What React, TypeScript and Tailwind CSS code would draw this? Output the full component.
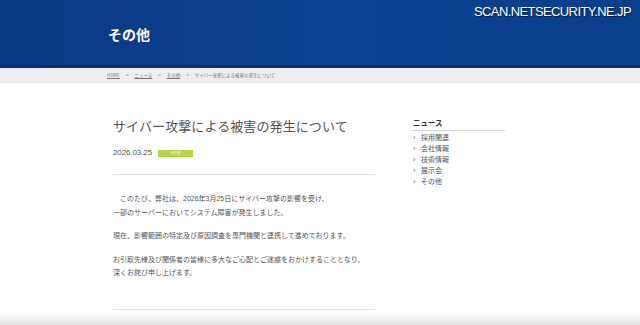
import React from "react";

const jp = { fontFamily: '"Noto Sans CJK JP", "Noto Sans", sans-serif' };
const body = { fontFamily: '"Liberation Sans", "Noto Sans CJK JP", sans-serif' };

export default function App() {
  const items = ["採用関連", "会社情報", "技術情報", "展示会", "その他"];
  return (
    <div className="relative w-[640px] h-[325px] overflow-hidden bg-white" style={jp}>
      {/* Header */}
      <header className="relative h-[68px] border-b-[3px] border-[#06306e] bg-gradient-to-r from-[#083a84] via-[#0b4090] to-[#0a3f8d]">
        <div className="absolute right-[9px] top-[3px] text-white text-[13px] tracking-[-0.6px] leading-[18px] [text-shadow:1px_1px_1px_rgba(0,0,0,0.6)]" style={{ fontFamily: '"Liberation Sans", Arial, sans-serif' }}>
          SCAN.NETSECURITY.NE.JP
        </div>
        <div className="pl-[108px] pt-[24px]">
          <h1 className="text-white text-[14px] font-bold leading-[20px]">その他</h1>
        </div>
      </header>

      {/* Breadcrumb */}
      <nav className="h-[15px] bg-[#eeeeee] flex items-center pl-[107px] text-[4.5px] text-[#777] gap-[6px] leading-none">
        <span className="underline">HOME</span>
        <span>&gt;</span>
        <span className="underline">ニュース</span>
        <span>&gt;</span>
        <span className="underline">その他</span>
        <span>&gt;</span>
        <span>サイバー攻撃による被害の発生について</span>
      </nav>

      {/* Content */}
      <div className="flex pl-[113px]">
        <main className="w-[262px]">
          <h2 className="mt-[35px] text-[13px] leading-[16px] text-[#555] font-normal tracking-[0.1px]">
            サイバー攻撃による被害の発生について
          </h2>
          <div className="mt-[14px] flex items-center h-[10px]">
            <span className="text-[8px] text-[#555] tracking-[-0.1px]" style={{ fontFamily: '"Liberation Sans", Arial, sans-serif' }}>2026.03.25</span>
            <span className="ml-[6px] w-[35px] h-[7px] bg-[#b5d64a] text-white text-[3.5px] flex items-center justify-center leading-none">その他</span>
          </div>
          <div className="mt-[16px] border-t border-[#e2e2e2]" />
          <div className="mt-[17px] text-[7px] leading-[13.5px] text-[#555]" style={body}>
            <p className="mb-[10px]">
              {"\u3000このたび、弊社は、2026年3月25日にサイバー攻撃の影響を受け、"}
              <br />
              一部のサーバーにおいてシステム障害が発生しました。
            </p>
            <p className="mb-[10px]">現在、影響範囲の特定及び原因調査を専門機関と連携して進めております。</p>
            <p>
              お引取先様及び関係者の皆様に多大なご心配とご迷惑をおかけすることとなり、
              <br />
              深くお詫び申し上げます。
            </p>
          </div>
          <div className="mt-[29px] border-t border-[#e2e2e2]" />
        </main>

        <aside className="ml-[36px] w-[94px]">
          <h3 className="mt-[35px] pl-[2px] text-[7.5px] font-bold leading-[10px] text-[#333] pb-[1.5px] border-b border-[#d8d8d8]">
            ニュース
          </h3>
          <ul className="mt-[1.5px] text-[7px] leading-[11px] text-[#555]">
            {items.map((t) => (
              <li key={t} className="flex items-center pl-[2px]">
                <span className="w-[8px] text-[7px] text-[#666]" style={{ fontFamily: '"Liberation Sans", Arial, sans-serif' }}>›</span>
                <span>{t}</span>
              </li>
            ))}
          </ul>
        </aside>
      </div>

      {/* bottom frame shading */}
      <div className="pointer-events-none absolute left-0 right-0 bottom-0 h-[12px] bg-gradient-to-b from-[rgba(0,0,0,0)] to-[rgba(0,0,0,0.11)]" />
    </div>
  );
}
